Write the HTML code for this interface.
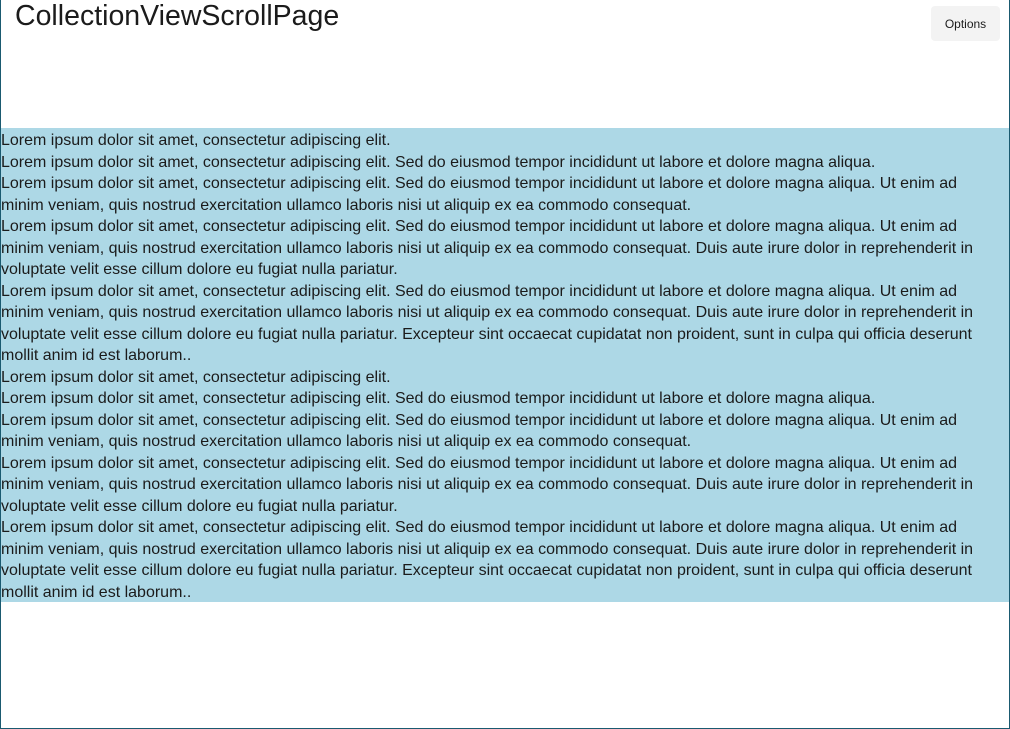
<!DOCTYPE html>
<html><head><meta charset="utf-8"><style>
html,body{margin:0;padding:0;background:#fff;}
body{width:1010px;height:729px;position:relative;overflow:hidden;font-family:"Liberation Sans",sans-serif;color:#1b1b1b;}
.frame{position:absolute;left:0;top:0;width:1008px;height:728px;border:1px solid #1a5a70;border-top:none;}
h1{position:absolute;left:15px;top:0px;margin:0;font-size:28.5px;font-weight:normal;color:#1b1b1b;}
.opt{position:absolute;left:931px;top:6px;width:69px;height:35px;background:#f3f3f3;border-radius:4px;font-size:12px;line-height:37px;text-align:center;color:#1b1b1b;}
.list{position:absolute;left:1px;top:128px;width:1008px;height:474px;background:#add8e6;padding-top:2px;box-sizing:border-box;}
.list div{white-space:nowrap;font-size:16px;line-height:21.5px;height:21.5px;overflow:hidden;}
</style></head><body>
<div class="frame"></div>
<h1>CollectionViewScrollPage</h1>
<div class="opt">Options</div>
<div class="list">
<div>Lorem ipsum dolor sit amet, consectetur adipiscing elit.</div>
<div>Lorem ipsum dolor sit amet, consectetur adipiscing elit. Sed do eiusmod tempor incididunt ut labore et dolore magna aliqua.</div>
<div>Lorem ipsum dolor sit amet, consectetur adipiscing elit. Sed do eiusmod tempor incididunt ut labore et dolore magna aliqua. Ut enim ad</div>
<div>minim veniam, quis nostrud exercitation ullamco laboris nisi ut aliquip ex ea commodo consequat.</div>
<div>Lorem ipsum dolor sit amet, consectetur adipiscing elit. Sed do eiusmod tempor incididunt ut labore et dolore magna aliqua. Ut enim ad</div>
<div>minim veniam, quis nostrud exercitation ullamco laboris nisi ut aliquip ex ea commodo consequat. Duis aute irure dolor in reprehenderit in</div>
<div>voluptate velit esse cillum dolore eu fugiat nulla pariatur.</div>
<div>Lorem ipsum dolor sit amet, consectetur adipiscing elit. Sed do eiusmod tempor incididunt ut labore et dolore magna aliqua. Ut enim ad</div>
<div>minim veniam, quis nostrud exercitation ullamco laboris nisi ut aliquip ex ea commodo consequat. Duis aute irure dolor in reprehenderit in</div>
<div>voluptate velit esse cillum dolore eu fugiat nulla pariatur. Excepteur sint occaecat cupidatat non proident, sunt in culpa qui officia deserunt</div>
<div>mollit anim id est laborum..</div>
<div>Lorem ipsum dolor sit amet, consectetur adipiscing elit.</div>
<div>Lorem ipsum dolor sit amet, consectetur adipiscing elit. Sed do eiusmod tempor incididunt ut labore et dolore magna aliqua.</div>
<div>Lorem ipsum dolor sit amet, consectetur adipiscing elit. Sed do eiusmod tempor incididunt ut labore et dolore magna aliqua. Ut enim ad</div>
<div>minim veniam, quis nostrud exercitation ullamco laboris nisi ut aliquip ex ea commodo consequat.</div>
<div>Lorem ipsum dolor sit amet, consectetur adipiscing elit. Sed do eiusmod tempor incididunt ut labore et dolore magna aliqua. Ut enim ad</div>
<div>minim veniam, quis nostrud exercitation ullamco laboris nisi ut aliquip ex ea commodo consequat. Duis aute irure dolor in reprehenderit in</div>
<div>voluptate velit esse cillum dolore eu fugiat nulla pariatur.</div>
<div>Lorem ipsum dolor sit amet, consectetur adipiscing elit. Sed do eiusmod tempor incididunt ut labore et dolore magna aliqua. Ut enim ad</div>
<div>minim veniam, quis nostrud exercitation ullamco laboris nisi ut aliquip ex ea commodo consequat. Duis aute irure dolor in reprehenderit in</div>
<div>voluptate velit esse cillum dolore eu fugiat nulla pariatur. Excepteur sint occaecat cupidatat non proident, sunt in culpa qui officia deserunt</div>
<div>mollit anim id est laborum..</div>
</div>
</body></html>
